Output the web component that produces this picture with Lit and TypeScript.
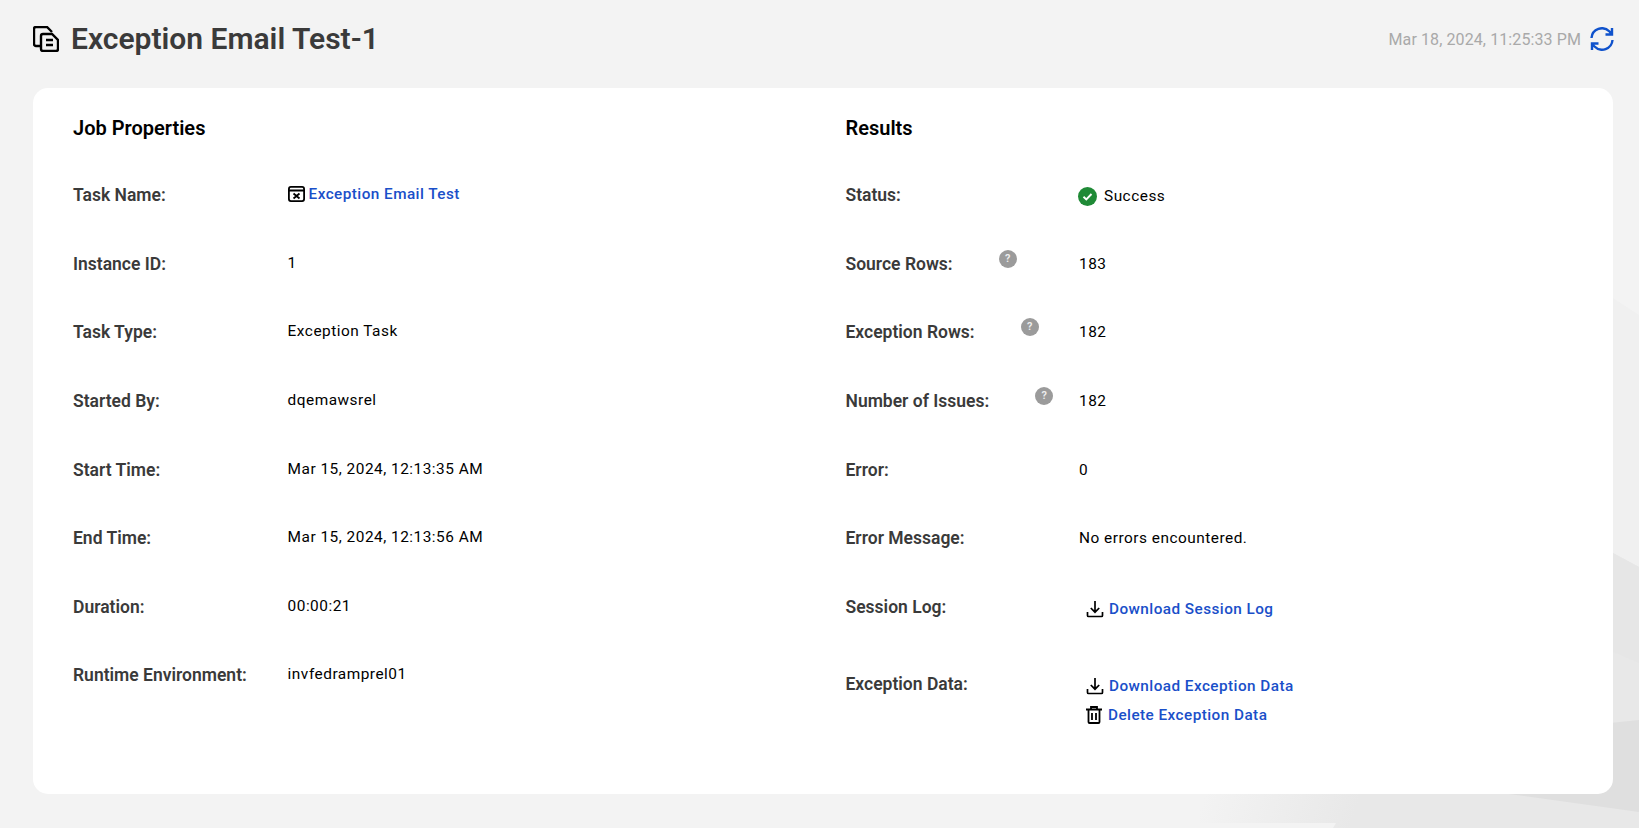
import { LitElement, html, css, svg } from "lit";
import { customElement } from "lit/decorators.js";

type Row = { label: string; value: string };

const jobRows: Row[] = [
  { label: "Instance ID:", value: "1" },
  { label: "Task Type:", value: "Exception Task" },
  { label: "Started By:", value: "dqemawsrel" },
  { label: "Start Time:", value: "Mar 15, 2024, 12:13:35 AM" },
  { label: "End Time:", value: "Mar 15, 2024, 12:13:56 AM" },
  { label: "Duration:", value: "00:00:21" },
  { label: "Runtime Environment:", value: "invfedramprel01" },
];

const downloadIcon = html`<svg class="link-icon" width="18" height="18" viewBox="0 0 18 18" fill="none" stroke="#000" stroke-width="1.7">
  <path d="M9 1v11M4.800 8 9 12.200 13.200 8M1.500 12v3.500a1 1 0 0 0 1 1h13a1 1 0 0 0 1-1V12" />
</svg>`;

const trashIcon = html`<svg class="link-icon" width="16" height="18" viewBox="0 0 16 18" fill="none" stroke="#000" stroke-width="1.8">
  <path d="M0 3.500h16M5 3.500V1h6v2.500M2.500 3.500V16a1 1 0 0 0 1 1h9a1 1 0 0 0 1-1V3.500M6 7v7M10 7v7" />
</svg>`;

@customElement("app-root")
export class AppRoot extends LitElement {
  static styles = css`
    :host {
      display: block;
      position: relative;
      height: 828px;
      overflow: hidden;
      background: #f3f3f3;
      font-family: Roboto, "Liberation Sans", sans-serif;
    }
    .bg {
      position: absolute;
      left: 0;
      top: 0;
    }
    .page {
      position: relative;
      padding: 0 26px 0 33px;
    }
    header {
      height: 88px;
      display: flex;
      align-items: center;
      justify-content: space-between;
      padding-bottom: 10px;
      box-sizing: border-box;
    }
    .title {
      display: flex;
      align-items: center;
      gap: 12px;
    }
    h1 {
      margin: -2px 0 0;
      font-size: 30px;
      font-weight: 600;
      color: #3a3a3a;
    }
    .stamp {
      display: flex;
      align-items: center;
      gap: 9px;
      margin-right: -1px;
      font-size: 16px;
      color: #a9a9a9;
      letter-spacing: 0.1px;
    }
    .card {
      height: 706px;
      box-sizing: border-box;
      background: #fff;
      border-radius: 15px;
      padding: 28px 40px;
      display: grid;
      grid-template-columns: 772.500px 1fr;
    }
    h2 {
      margin: 0 0 21px;
      font-size: 20px;
      line-height: 24px;
      font-weight: 600;
      color: #000;
    }
    .row {
      display: grid;
      grid-template-columns: 214.600px 1fr;
      align-items: center;
      height: 68.600px;
    }
    .right .row {
      grid-template-columns: 233.500px 1fr;
    }
    .label {
      display: flex;
      font-size: 17.500px;
      font-weight: 600;
      color: #3a3a3a;
    }
    .value {
      font-size: 15.400px;
      font-weight: 400;
      color: #000;
      letter-spacing: 0.5px;
      margin-top: -2px;
    }
    .right .value {
      margin-top: 0;
    }
    .help {
      width: 18px;
      height: 18px;
      margin: -4px 0 0 46px;
      border-radius: 50%;
      background: #9b9b9b;
      color: #eee;
      font-size: 11px;
      line-height: 18px;
      text-align: center;
    }
    .right .status {
      display: flex;
      align-items: center;
      gap: 7px;
      margin: 2px 0 0 -1px;
    }
    a {
      color: #1a4fc9;
      text-decoration: none;
      font-weight: 500;
      letter-spacing: 0.45px;
      font-size: 15.300px;
    }
    .task {
      display: flex;
      align-items: center;
      gap: 4px;
    }
    .link-row {
      display: flex;
      align-items: center;
      gap: 5px;
      margin-left: 7px;
      height: 29px;
    }
    .link-row.trash {
      gap: 6px;
    }
    .session {
      margin-top: 5px;
    }
    .row.tall {
      align-items: start;
      padding-top: 33px;
      height: 110px;
      box-sizing: border-box;
    }
    .tall .links {
      margin-top: -3px;
    }
  `;

  private bgShapes() {
    return svg`
      <defs>
        <linearGradient id="fade" gradientUnits="userSpaceOnUse" x1="1210" y1="780" x2="1350" y2="828">
          <stop offset="0" stop-color="#f3f3f3" />
          <stop offset="1" stop-color="#e8e8e8" />
        </linearGradient>
      </defs>
      <polygon points="1639,315 1613,298 1500,298 1500,700 1639,700" fill="#f0f0f0" />
      <polygon points="1639,567 1613,553 1200,553 1200,823 1336,823 1333,828 1639,828" fill="url(#fade)" />
      <polygon points="1639,567 1613,553 1613,652 1639,663" fill="#e6e6e6" />
      <polygon points="1639,720 1600,724 1509,794 1639,812" fill="#dfdfdf" />
    `;
  }

  private renderRow(r: Row) {
    return html`<div class="row"><div class="label">${r.label}</div><div class="value">${r.value}</div></div>`;
  }

  private renderHelpRow(label: string, value: string) {
    return html`<div class="row">
      <div class="label">${label}<span class="help">?</span></div>
      <div class="value">${value}</div>
    </div>`;
  }

  render() {
    return html`
      <svg class="bg" width="1639" height="828">${this.bgShapes()}</svg>
      <div class="page">
        <header>
          <div class="title">
            <svg width="26" height="26" viewBox="0 0 26 26" fill="none" stroke="#000" stroke-width="2.400">
              <path d="M7 20H3a2 2 0 0 1-2-2V3a2 2 0 0 1 2-2h11l5 5" />
              <path d="M8 10a2 2 0 0 1 2-2h9l6 6v9a2 2 0 0 1-2 2H10a2 2 0 0 1-2-2z" />
              <path d="M13 14h7M13 19h7" />
            </svg>
            <h1>Exception Email Test-1</h1>
          </div>
          <div class="stamp">
            Mar 18, 2024, 11:25:33 PM
            <svg width="24" height="24" viewBox="0 0 24 24" fill="none" stroke="#0f52cc" stroke-width="2.400">
              <path d="M1.500 11a10.500 10.500 0 0 1 18-6.500l2.500 3M22 1v6.500h-6.500" />
              <path d="M22.500 13a10.500 10.500 0 0 1-18 6.500L2 17M2 23v-6.500h6.500" />
            </svg>
          </div>
        </header>
        <section class="card">
          <div class="left">
            <h2>Job Properties</h2>
            <div class="row">
              <div class="label">Task Name:</div>
              <div class="value task">
                <svg width="17" height="16" viewBox="0 0 17 16" fill="none" stroke="#000" stroke-width="1.800">
                  <rect x="0.900" y="0.900" width="15.200" height="14.200" rx="2" />
                  <path d="M1 4.500h15M5.500 7.500l6 5M11.500 7.500l-6 5" />
                </svg>
                <a href="#">Exception Email Test</a>
              </div>
            </div>
            ${jobRows.map((r) => this.renderRow(r))}
          </div>
          <div class="right">
            <h2>Results</h2>
            <div class="row">
              <div class="label">Status:</div>
              <div class="value status">
                <svg width="19" height="19" viewBox="0 0 19 19">
                  <circle cx="9.500" cy="9.500" r="9.500" fill="#1f8a36" />
                  <path d="M5.500 9.800l2.800 2.700 5.200-5.500" fill="none" stroke="#fff" stroke-width="1.900" />
                </svg>
                Success
              </div>
            </div>
            ${this.renderHelpRow("Source Rows:", "183")}
            ${this.renderHelpRow("Exception Rows:", "182")}
            ${this.renderHelpRow("Number of Issues:", "182")}
            ${this.renderRow({ label: "Error:", value: "0" })}
            ${this.renderRow({ label: "Error Message:", value: "No errors encountered." })}
            <div class="row">
              <div class="label">Session Log:</div>
              <div class="link-row session">${downloadIcon}<a href="#">Download Session Log</a></div>
            </div>
            <div class="row tall">
              <div class="label">Exception Data:</div>
              <div class="links">
                <div class="link-row">${downloadIcon}<a href="#">Download Exception Data</a></div>
                <div class="link-row trash">${trashIcon}<a href="#">Delete Exception Data</a></div>
              </div>
            </div>
          </div>
        </section>
      </div>
    `;
  }
}
